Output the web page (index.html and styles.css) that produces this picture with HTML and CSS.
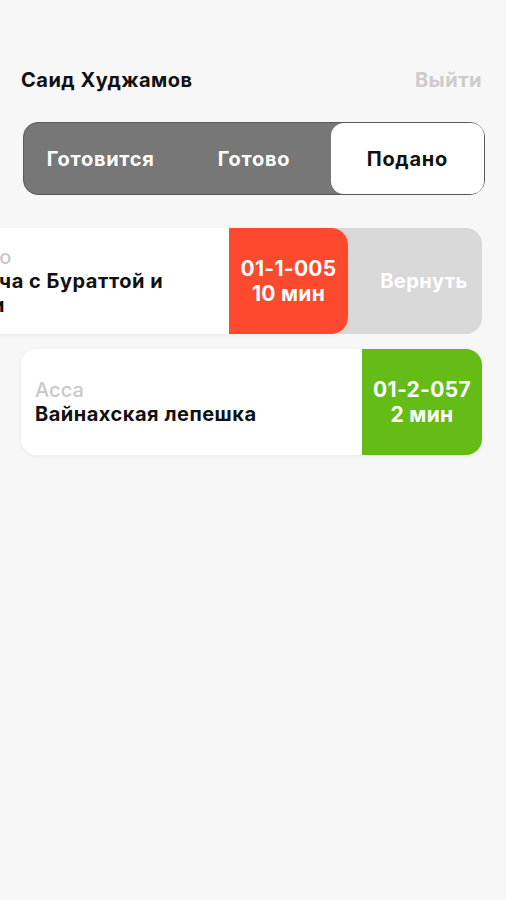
FILE: index.html
```html
<!DOCTYPE html>
<html lang="ru">
<head>
<meta charset="utf-8">
<link rel="stylesheet" href="styles.css">
</head>
<body>
<div class="screen">
  <header class="top">
    <div class="user">Саид Худжамов</div>
    <div class="logout">Выйти</div>
  </header>
  <nav class="seg">
    <div class="seg-item">Готовится</div>
    <div class="seg-item">Готово</div>
    <div class="seg-item active">Подано</div>
  </nav>
  <div class="list">
    <div class="row swiped">
      <div class="card">
        <div class="info">
          <div class="label">Кафе Дино</div>
          <div class="title">XL фокачча с Бураттой и томатами</div>
        </div>
        <div class="badge red"><span>01-1-005</span><span>10 мин</span></div>
      </div>
      <div class="action">Вернуть</div>
    </div>
    <div class="row">
      <div class="card">
        <div class="info">
          <div class="label">Асса</div>
          <div class="title">Вайнахская лепешка</div>
        </div>
        <div class="badge green"><span>01-2-057</span><span>2 мин</span></div>
      </div>
    </div>
  </div>
</div>
</body>
</html>
```
FILE: styles.css
```css
* { box-sizing: border-box; }
html, body { margin: 0; padding: 0; }
body {
  background: #f7f7f7;
  font-family: Inter, "Noto Sans", sans-serif;
  overflow-x: hidden;
  width: 506px;
  height: 900px;
}
.screen { padding: 68px 24px 0 21px; }
.top {
  display: flex;
  justify-content: space-between;
  align-items: center;
  height: 24px;
  font-size: 20px;
  font-weight: 700;
  letter-spacing: 0.5px;
}
.user { color: #111; }
.logout { color: #cccccc; }
.seg {
  margin-top: 30px;
  margin-left: 2px;
  margin-right: -3px;
  height: 73px;
  display: flex;
  background: #777777;
  border: 1px solid #5a5a5a;
  border-radius: 15px;
}
.seg-item {
  flex: 1;
  display: flex;
  align-items: center;
  justify-content: center;
  font-size: 20px;
  font-weight: 700;
  letter-spacing: 0.7px;
  color: #fff;
  border-radius: 13px;
}
.seg-item.active { background: #fff; color: #111; }
.list {
  margin-top: 33px;
  display: flex;
  flex-direction: column;
  gap: 15px;
}
.row { display: flex; height: 106px; }
.card {
  flex: 0 0 100%;
  display: flex;
  background: #fff;
  border-radius: 16px;
  overflow: hidden;
  box-shadow: 0 1px 4px rgba(0,0,0,0.06);
  position: relative;
  z-index: 1;
}
.swiped .card { margin-left: -134px; }
.info {
  flex: 1;
  padding: 0 14px;
  display: flex;
  flex-direction: column;
  justify-content: center;
  min-width: 0;
}
.label { font-size: 20px; font-weight: 500; color: #c8c8c8; line-height: 24px; letter-spacing: 0.1px; }
.title { font-size: 20px; font-weight: 700; color: #111; line-height: 24px; letter-spacing: 0.5px; }
.badge {
  flex: 0 0 120px;
  display: flex;
  flex-direction: column;
  align-items: center;
  justify-content: center;
  color: #fff;
  font-size: 21px;
  font-weight: 700;
  letter-spacing: 0.3px;
  line-height: 25px;
}
.swiped .badge { flex-basis: 119px; border-radius: 0 16px 16px 0; }
.red { background: #fd4a2f; }
.green { background: #65bc16; }
.action {
  flex: 0 0 154px;
  margin-left: -20px;
  padding-left: 38px;
  background: #d9d9d9;
  border-radius: 0 16px 16px 0;
  display: flex;
  align-items: center;
  justify-content: center;
  color: #fff;
  font-size: 20px;
  font-weight: 700;
  letter-spacing: 0.4px;
}
```
